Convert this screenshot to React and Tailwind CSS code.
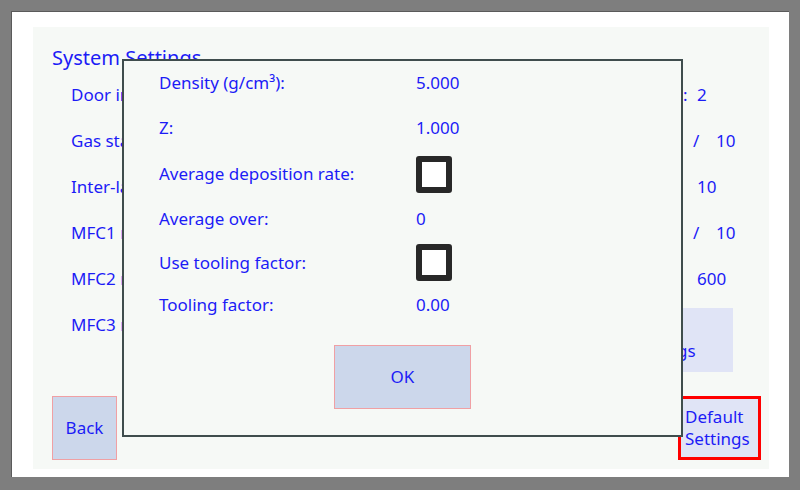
const font = { fontFamily: '"Noto Sans", "Open Sans", sans-serif' };

const rows = [
  { label: 'Door interlock delay (s):', right: (
    <>
      <span className="inline-block w-[7px]" />
      <span className="inline-block w-[14px]">:</span>
      <span>2</span>
    </>
  ) },
  { label: 'Gas station purge:', right: (
    <>
      <span className="inline-block w-[17px]" />
      <span className="inline-block w-[23px]">/</span>
      <span>10</span>
    </>
  ) },
  { label: 'Inter-layer delay (s):', right: (
    <>
      <span className="inline-block w-[21px]" />
      <span>10</span>
    </>
  ) },
  { label: 'MFC1 range (sccm):', right: (
    <>
      <span className="inline-block w-[17px]" />
      <span className="inline-block w-[23px]">/</span>
      <span>10</span>
    </>
  ) },
  { label: 'MFC2 range (sccm):', right: (
    <>
      <span className="inline-block w-[21px]" />
      <span>600</span>
    </>
  ) },
];

function Checkbox() {
  return <div className="w-[36px] h-[37px] border-[6px] border-[#282828] rounded-[3px] bg-white" />;
}

const dialogRows = [
  { label: 'Density (g/cm³):', value: '5.000', h: 'h-[44px]' },
  { label: 'Z:', value: '1.000', h: 'h-[46px]' },
  { label: 'Average deposition rate:', value: <Checkbox />, h: 'h-[46px]' },
  { label: 'Average over:', value: '0', h: 'h-[44px]' },
  { label: 'Use tooling factor:', value: <Checkbox />, h: 'h-[43px]' },
  { label: 'Tooling factor:', value: '0.00', h: 'h-[42px]' },
];

export default function App() {
  return (
    <div className="w-[800px] h-[490px] bg-[#7e7e7e] pl-[11px] pt-[11px] pr-[11px] pb-[13px]" style={font}>
      <div className="w-full h-full bg-white border-t border-l border-[#5a5a5a] pl-[21px] pt-[15px] pr-[20px] pb-[8px]">
        <div className="relative w-full h-full bg-[#f6f9f6] flex flex-col text-[#1c1cf6] text-[17px]">
          <div className="pl-[19px] pt-[17px] text-[20px] leading-[28px]">System Settings</div>

          <div className="flex flex-col">
            {rows.map((r, i) => (
              <div key={i} className="flex items-center h-[46px] pl-[38px]">
                <span className="flex-1 whitespace-nowrap">{r.label}</span>
                <div className="w-[93px] whitespace-pre">{r.right}</div>
              </div>
            ))}
            <div className="flex h-[46px] pl-[38px]">
              <span className="flex-1 whitespace-nowrap self-center">MFC3 range (sccm):</span>
              <div className="mt-[6px] mr-[36px] w-[105px] h-[64px] shrink-0 bg-[#e0e4f6] flex flex-col justify-center pl-[3px] leading-[22px]">
                <span>Tool</span>
                <span>Settings</span>
              </div>
            </div>
          </div>

          <div className="mt-auto flex items-end justify-between pl-[19px] pr-[8px] pb-[9px]">
            <button className="w-[65px] h-[64px] bg-[#ccd7eb] border border-[#f0a0a4] flex items-center justify-center">
              Back
            </button>
            <button className="w-[83px] h-[64px] bg-[#e0e4f6] border-[3px] border-[#ff0000] flex flex-col justify-center items-start pl-[4px] leading-[22px]">
              <span>Default</span>
              <span>Settings</span>
            </button>
          </div>

          <div className="absolute left-[89px] top-[32px] w-[561px] h-[378px] border-2 border-[#3f4d4d] bg-[#f6f9f6] flex flex-col">
            <div className="flex flex-col pl-[35px]">
              {dialogRows.map((r, i) => (
                <div key={i} className={`flex items-center ${r.h}`}>
                  <span className="w-[257px]">{r.label}</span>
                  <div>{r.value}</div>
                </div>
              ))}
            </div>
            <div className="flex justify-center mt-[19px]">
              <button className="w-[137px] h-[64px] bg-[#ccd7eb] border border-[#f0a0a4] flex items-center justify-center">
                OK
              </button>
            </div>
          </div>
        </div>
      </div>
    </div>
  );
}
